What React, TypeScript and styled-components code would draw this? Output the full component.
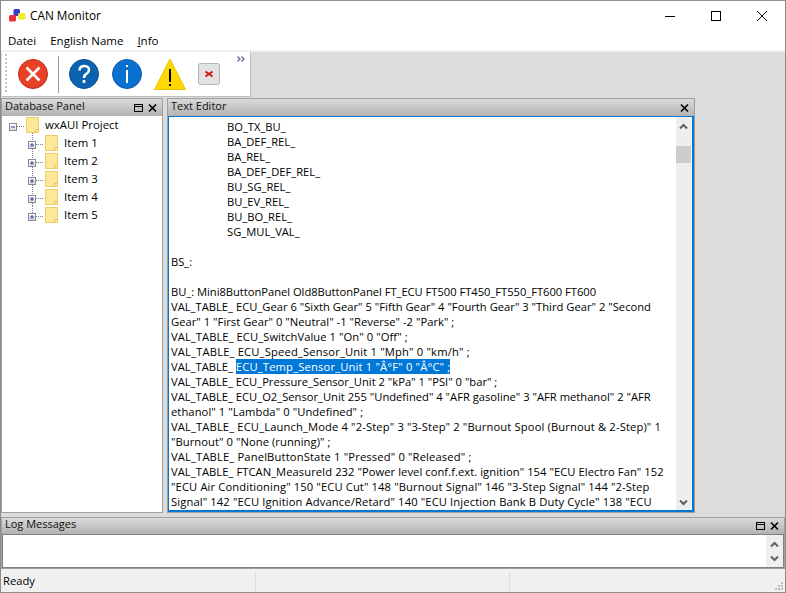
import React from 'react';
import styled, { createGlobalStyle } from 'styled-components';

const Global = createGlobalStyle`
  html, body { margin: 0; padding: 0; background: #fff; }
  * { box-sizing: border-box; }
`;

const Frame = styled.div`
  width: 786px;
  height: 593px;
  display: flex;
  flex-direction: column;
  background: #dcdcdc;
  border: 1px solid #8c8c8c;
  font-family: 'Open Sans', 'Noto Sans', sans-serif;
  font-size: 11.2px;
  color: #000;
  overflow: hidden;
`;

const TitleBar = styled.div`
  height: 29px;
  background: #fff;
  display: flex;
  align-items: center;
  padding-left: 8px;
  flex: none;
`;

const AppIcon = styled.svg`
  width: 17px;
  height: 15px;
  margin: 2px 4px 0 0;
`;

const Title = styled.div`
  font-size: 11.8px;
  padding-bottom: 2px;
  flex: 1;
`;

const WinBtn = styled.div`
  width: 46px;
  height: 29px;
  display: flex;
  align-items: center;
  justify-content: center;
`;

const MenuBar = styled.div`
  height: 20px;
  background: #fff;
  display: flex;
  align-items: center;
  flex: none;
  padding-left: 7px;
  gap: 14px;
  font-size: 11.5px;
`;

const Strip = styled.div`
  height: 2px;
  background: #f0f0f0;
  flex: none;
`;

const ToolRow = styled.div`
  height: 46px;
  flex: none;
  padding-left: 1px;
  background: #dcdcdc;
`;

const Toolbar = styled.div`
  position: relative;
  width: 249px;
  height: 45px;
  background: #fff;
  border-right: 1px solid #c0c0c0;
  border-bottom: 1px solid #c0c0c0;
  display: flex;
  align-items: center;
  padding-left: 3px;
`;

const Gripper = styled.div`
  width: 2px;
  height: 40px;
  margin-right: 11px;
  background: repeating-linear-gradient(to bottom, #c4c4c4 0 2px, transparent 2px 4px);
`;

const ToolDivider = styled.div`
  width: 1px;
  height: 37px;
  background: #9a9a9a;
  margin: 0 10px;
`;

const ToolIcon = styled.svg<{ $gap?: number }>`
  flex: none;
  margin-right: ${(p) => p.$gap ?? 0}px;
`;

const More = styled.svg`
  position: absolute;
  right: 5px;
  top: 4px;
`;

const Work = styled.div`
  flex: 1;
  min-height: 0;
  display: flex;
  padding-bottom: 4px;
  gap: 4px;
`;

const Pane = styled.div<{ $w: number }>`
  width: ${(p) => p.$w}px;
  display: flex;
  flex-direction: column;
  border: 1px solid #a0a0a0;
  background: #fff;
  flex: none;
`;

const Caption = styled.div`
  height: 17px;
  flex: none;
  background: linear-gradient(to bottom, #dadada, #b2b2b2);
  display: flex;
  align-items: center;
  padding: 0 2px 0 3px;
  font-size: 11px;
  color: #111;
`;

const LogCaption = styled(Caption)`
  height: 16px;
`;

const CaptionText = styled.div`
  flex: 1;
  padding-bottom: 5px;
`;

const CaptionBtn = styled.svg`
  width: 14px;
  height: 14px;
  flex: none;
`;

const Tree = styled.div`
  flex: 1;
  font-size: 11.4px;
`;

const TreeRow = styled.div<{ $child?: boolean }>`
  position: relative;
  height: 18px;
  display: flex;
  align-items: center;
  padding-left: ${(p) => (p.$child ? 26 : 7)}px;
`;

const TreeBtn = styled.div`
  width: 8px;
  height: 8px;
  margin-top: 3px;
  border: 1px solid #8a8a9a;
  background: linear-gradient(to bottom, #fff, #dcdcdc);
  display: flex;
  align-items: center;
  justify-content: center;
  flex: none;
  z-index: 1;
`;

const DotLine = styled.div`
  width: 7px;
  margin: 3px 2px 0 0;
  border-top: 1px dotted #808080;
  flex: none;
`;

const VLine = styled.div<{ $last?: boolean }>`
  position: absolute;
  left: 30px;
  top: -1px;
  height: ${(p) => (p.$last ? 12 : 19)}px;
  border-left: 1px dotted #808080;
`;

const TreeLabel = styled.span`
  margin-left: 6px;
  padding-bottom: 2px;
`;

const Folder = styled.svg`
  flex: none;
`;

const EditorFrame = styled.div`
  flex: 1;
  min-height: 0;
  display: flex;
  border-style: solid;
  border-color: #0078d7;
  border-width: 1px 2px 2px 1px;
`;

const EditorText = styled.div`
  flex: 1;
  overflow: hidden;
  padding: 2px 0 0 2px;
  line-height: 15px;
  white-space: pre;
`;

const Indented = styled.div`
  padding-left: 56px;
`;

const Line = styled.div<{ $spread?: number }>`
  min-height: 15px;
  letter-spacing: ${(p) => p.$spread ?? 0}px;
`;

const Selected = styled.span`
  background: #0078d7;
  color: #fff;
  letter-spacing: 0.17px;
`;

const ScrollBar = styled.div`
  width: 15px;
  margin-right: 1px;
  flex: none;
  background: #eeeeee;
  position: relative;
  display: flex;
  flex-direction: column;
  justify-content: space-between;
  align-items: center;
  padding: 6px 0 4px;
`;

const Thumb = styled.div`
  position: absolute;
  top: 29px;
  left: 0;
  width: 15px;
  height: 17px;
  background: #cdcdcd;
`;

const Log = styled.div`
  height: 52px;
  flex: none;
  display: flex;
  flex-direction: column;
  background: #fff;
  border: 1px solid #a0a0a0;
`;

const LogBody = styled.div`
  flex: 1;
  display: flex;
  justify-content: flex-end;
  border: 1px solid #808080;
`;

const LogScroll = styled(ScrollBar)`
  width: 17px;
  margin-right: 0;
  padding: 6px 0 5px;
`;

const StatusBar = styled.div`
  flex: none;
  height: 23px;
  background: #f0f0f0;
  display: flex;
  align-items: center;
  position: relative;
`;

const StatusCell = styled.div<{ $w: number }>`
  width: ${(p) => p.$w}px;
  height: 20px;
  padding: 0 0 2px 2px;
  display: flex;
  align-items: center;
  border-right: 1px solid #dcdcdc;
  margin-top: 2px;
`;

const Grip = styled.svg`
  position: absolute;
  right: 1px;
  bottom: 1px;
`;

const Maximize = () => (
  <CaptionBtn viewBox="0 0 14 14">
    <rect x="2.5" y="3.5" width="8" height="7" fill="none" stroke="#000" />
    <path d="M2 5.5h9" stroke="#000" />
  </CaptionBtn>
);

const Close = () => (
  <CaptionBtn viewBox="0 0 14 14">
    <path d="M3 3.5l7 7M10 3.5l-7 7" stroke="#000" strokeWidth="1.6" />
  </CaptionBtn>
);

const FolderIcon = () => (
  <Folder width="13" height="16" viewBox="0 0 13 16">
    <path d="M.5.5h12v15H.5z" fill="#fde79a" stroke="#f0cd62" />
    <path d="M9.5 15.5v-3h3" fill="none" stroke="#eec24f" />
  </Folder>
);

const Chevron = ({ up }: { up?: boolean }) => (
  <svg width="9" height="7" viewBox="0 0 9 7">
    <path d={up ? 'M1 5.5l3.5-3.5 3.5 3.5' : 'M1 1.5l3.5 3.5 3.5-3.5'} fill="none" stroke="#606060" strokeWidth="2" />
  </svg>
);

const items = ['Item 1', 'Item 2', 'Item 3', 'Item 4', 'Item 5'];

const relLines = [
  'BO_TX_BU_',
  'BA_DEF_REL_',
  'BA_REL_',
  'BA_DEF_DEF_REL_',
  'BU_SG_REL_',
  'BU_EV_REL_',
  'BU_BO_REL_',
  'SG_MUL_VAL_',
];

// second value nudges the line width towards the original font's
const before: [string, number?][] = [
  [''],
  ['BS_:'],
  [''],
  ['BU_: Mini8ButtonPanel Old8ButtonPanel FT_ECU FT500 FT450_FT550_FT600 FT600', -0.03],
  ['VAL_TABLE_ ECU_Gear 6 "Sixth Gear" 5 "Fifth Gear" 4 "Fourth Gear" 3 "Third Gear" 2 "Second', 0.01],
  ['Gear" 1 "First Gear" 0 "Neutral" -1 "Reverse" -2 "Park" ;', 0.03],
  ['VAL_TABLE_ ECU_SwitchValue 1 "On" 0 "Off" ;', 0.07],
  ['VAL_TABLE_ ECU_Speed_Sensor_Unit 1 "Mph" 0 "km/h" ;', 0.17],
];

const after: [string, number?][] = [
  ['VAL_TABLE_ ECU_Pressure_Sensor_Unit 2 "kPa" 1 "PSI" 0 "bar" ;'],
  ['VAL_TABLE_ ECU_O2_Sensor_Unit 255 "Undefined" 4 "AFR gasoline" 3 "AFR methanol" 2 "AFR'],
  ['ethanol" 1 "Lambda" 0 "Undefined" ;', 0.08],
  ['VAL_TABLE_ ECU_Launch_Mode 4 "2-Step" 3 "3-Step" 2 "Burnout Spool (Burnout & 2-Step)" 1', 0.136],
  ['"Burnout" 0 "None (running)" ;', 0.06],
  ['VAL_TABLE_ PanelButtonState 1 "Pressed" 0 "Released" ;', 0.15],
  ['VAL_TABLE_ FTCAN_MeasureId 232 "Power level conf.f.ext. ignition" 154 "ECU Electro Fan" 152', 0.055],
  ['"ECU Air Conditioning" 150 "ECU Cut" 148 "Burnout Signal" 146 "3-Step Signal" 144 "2-Step', 0.12],
  ['Signal" 142 "ECU Ignition Advance/Retard" 140 "ECU Injection Bank B Duty Cycle" 138 "ECU', 0.125],
];

export default function App() {
  return (
    <Frame>
      <Global />
      <TitleBar>
        <AppIcon viewBox="0 0 17 15">
          <rect x="4.5" y="0" width="6.5" height="7" rx="1.5" fill="#3c3cc8" />
          <rect x="0" y="6" width="7" height="6.5" rx="1.5" fill="#e8303c" />
          <rect x="9" y="4" width="7.5" height="6.5" rx="1.5" fill="#f2ea30" />
        </AppIcon>
        <Title>CAN Monitor</Title>
        <WinBtn>
          <svg width="10" height="10" viewBox="0 0 10 10"><path d="M0 5.5h10" stroke="#000" /></svg>
        </WinBtn>
        <WinBtn>
          <svg width="10" height="10" viewBox="0 0 10 10"><rect x=".5" y=".5" width="9" height="9" fill="none" stroke="#000" /></svg>
        </WinBtn>
        <WinBtn>
          <svg width="10" height="10" viewBox="0 0 10 10"><path d="M0 0l10 10M10 0L0 10" stroke="#000" /></svg>
        </WinBtn>
      </TitleBar>
      <MenuBar>
        <span>Datei</span>
        <span>English Name</span>
        <span><u>I</u>nfo</span>
      </MenuBar>
      <Strip />
      <ToolRow>
        <Toolbar>
          <Gripper />
          <ToolIcon width="30" height="30" viewBox="0 0 30 30">
            <circle cx="15" cy="15" r="14.5" fill="#ea4126" stroke="#b8301c" />
            <path d="M8.5 8.5l13 13M21.5 8.5l-13 13" stroke="#fff" strokeWidth="2.6" />
          </ToolIcon>
          <ToolDivider />
          <ToolIcon width="30" height="30" viewBox="0 0 30 30" $gap={13}>
            <circle cx="15" cy="15" r="14.5" fill="#0b62b0" stroke="#084f8f" />
            <path d="M10.5 11.5C10.5 8 12.5 7 15.5 7C18.5 7 20 9 20 11C20 13.5 18 14 16.5 15.5C15.3 16.6 15 17.5 15 19" fill="none" stroke="#fff" strokeWidth="2.5" />
            <rect x="13.7" y="21" width="2.6" height="3" fill="#fff" />
          </ToolIcon>
          <ToolIcon width="30" height="30" viewBox="0 0 30 30" $gap={12}>
            <circle cx="15" cy="15" r="14.5" fill="#0a70cf" stroke="#0a5ba8" />
            <rect x="14" y="11" width="2" height="13" fill="#fff" />
            <rect x="14" y="6" width="2" height="2" fill="#fff" />
          </ToolIcon>
          <ToolIcon width="32" height="32" viewBox="0 0 32 32" $gap={12}>
            <path d="M16 1L31.5 31.5H.5z" fill="#ffd800" stroke="#e6c200" />
            <rect x="15" y="11" width="2" height="13" fill="#000" />
            <rect x="15" y="26" width="2" height="2" fill="#000" />
          </ToolIcon>
          <ToolIcon width="22" height="22" viewBox="0 0 22 22">
            <rect x=".5" y=".5" width="21" height="21" rx="2" fill="#e2e2e2" stroke="#b4b4b4" />
            <path d="M7.5 8.5l7 5M14.5 8.5l-7 5" stroke="#d01818" strokeWidth="2" />
          </ToolIcon>
          <More width="8" height="6" viewBox="0 0 8 6">
            <path d="M.5.5L3 3 .5 5.5M4.5.5L7 3 4.5 5.5" fill="none" stroke="#6a6aa8" strokeWidth="1.4" />
          </More>
        </Toolbar>
      </ToolRow>
      <Work>
        <Pane $w={162}>
          <Caption>
            <CaptionText>Database Panel</CaptionText>
            <Maximize />
            <Close />
          </Caption>
          <Tree>
            <TreeRow>
              <TreeBtn>
                <svg width="6" height="6" viewBox="0 0 6 6"><path d="M1 3h4" stroke="#2b4a9b" /></svg>
              </TreeBtn>
              <DotLine />
              <FolderIcon />
              <TreeLabel>wxAUI Project</TreeLabel>
            </TreeRow>
            {items.map((item, i) => (
              <TreeRow $child key={item}>
                <VLine $last={i === items.length - 1} />
                <TreeBtn>
                  <svg width="6" height="6" viewBox="0 0 6 6"><path d="M1 3h4M3 1v4" stroke="#2b4a9b" /></svg>
                </TreeBtn>
                <DotLine />
                <FolderIcon />
                <TreeLabel>{item}</TreeLabel>
              </TreeRow>
            ))}
          </Tree>
        </Pane>
        <Pane $w={528}>
          <Caption>
            <CaptionText>Text Editor</CaptionText>
            <Close />
          </Caption>
          <EditorFrame>
            <EditorText>
              {relLines.map((l) => (
                <Indented key={l}>{l}</Indented>
              ))}
              {before.map(([l, spread], i) => (
                <Line key={i} $spread={spread}>{l}</Line>
              ))}
              <Line>
                VAL_TABLE_ <Selected>ECU_Temp_Sensor_Unit 1 "Â°F" 0 "Â°C" ;</Selected>
              </Line>
              {after.map(([l, spread], i) => (
                <Line key={i} $spread={spread}>{l}</Line>
              ))}
            </EditorText>
            <ScrollBar>
              <Chevron up />
              <Thumb />
              <Chevron />
            </ScrollBar>
          </EditorFrame>
        </Pane>
      </Work>
      <Log>
        <LogCaption>
          <CaptionText>Log Messages</CaptionText>
          <Maximize />
          <Close />
        </LogCaption>
        <LogBody>
          <LogScroll>
            <Chevron up />
            <Chevron />
          </LogScroll>
        </LogBody>
      </Log>
      <StatusBar>
        <StatusCell $w={255}>Ready</StatusCell>
        <StatusCell $w={254} />
        <Grip width="10" height="10" viewBox="0 0 10 10">
          <path d="M7 1h2v2H7zM4 4h2v2H4zM7 4h2v2H7zM1 7h2v2H1zM4 7h2v2H4zM7 7h2v2H7z" fill="#bdbdbd" />
        </Grip>
      </StatusBar>
    </Frame>
  );
}
